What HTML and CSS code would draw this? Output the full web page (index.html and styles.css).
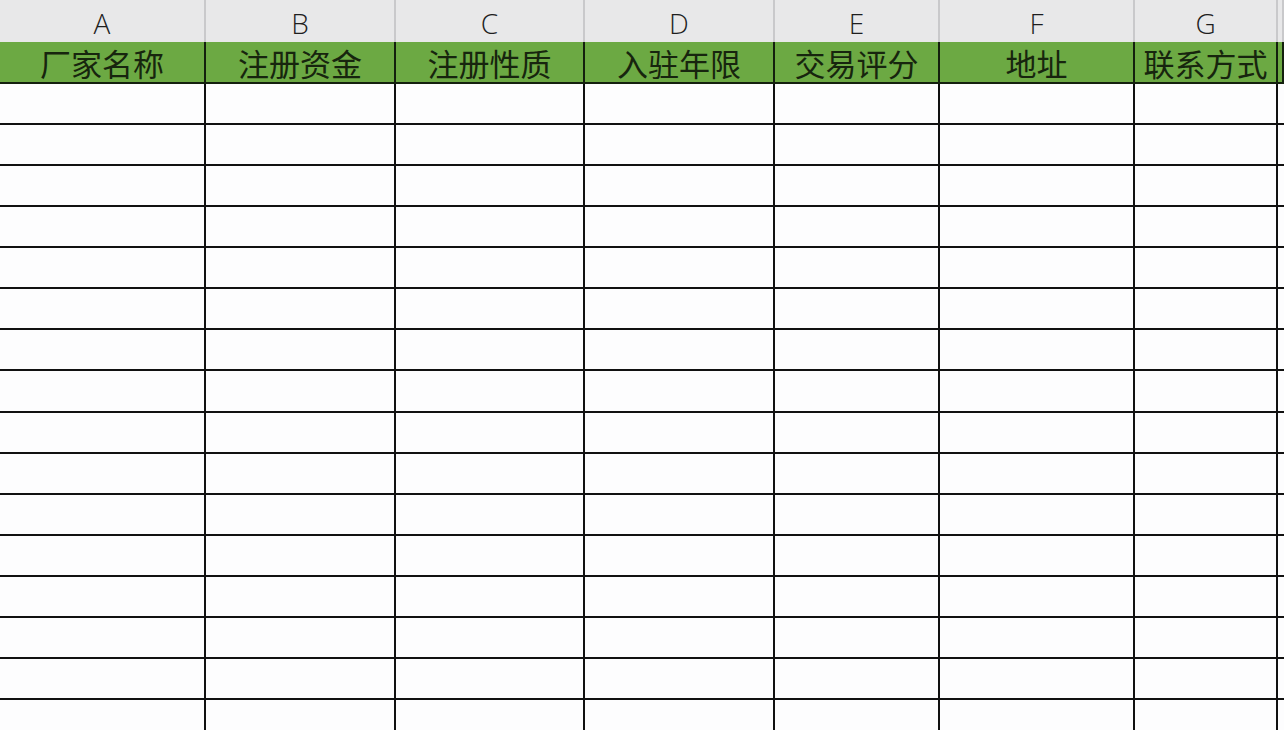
FILE: index.html
```html
<!DOCTYPE html>
<html lang="zh-CN">
<head>
<meta charset="utf-8">
<title>厂家信息表</title>
<link rel="stylesheet" href="styles.css">
</head>
<body>
<div class="sheet">
  <div class="col-letter">A</div>
  <div class="col-letter">B</div>
  <div class="col-letter">C</div>
  <div class="col-letter">D</div>
  <div class="col-letter">E</div>
  <div class="col-letter">F</div>
  <div class="col-letter">G</div>
  <div class="col-letter"></div>

  <div class="head">厂家名称</div>
  <div class="head">注册资金</div>
  <div class="head">注册性质</div>
  <div class="head">入驻年限</div>
  <div class="head">交易评分</div>
  <div class="head">地址</div>
  <div class="head">联系方式</div>
  <div class="head"></div>
</div>
</body>
</html>
```
FILE: styles.css
```css
html, body {
  margin: 0;
  padding: 0;
  width: 1284px;
  height: 730px;
  overflow: hidden;
  background: #fdfdfe;
}

.sheet {
  display: grid;
  grid-template-columns: 206px 190px 189px 190px 165px 195px 143px 1fr;
  grid-template-rows: 42px 42px;
  width: 1284px;
  min-height: 760px;
  position: relative;
  background:
    repeating-linear-gradient(to bottom, transparent 0, transparent 39.07px, #111 39.07px, #111 41.07px) 0 84px / 100% 100% no-repeat;
}

.col-letter {
  background: #e8e8e9;
  border-right: 2px solid #c9c9cb;
  box-sizing: border-box;
  font-family: "Open Sans", "Liberation Sans", sans-serif;
  font-weight: 300;
  font-size: 28px;
  color: #1e1e1e;
  text-align: center;
  line-height: 46px;
}

.head {
  background: #6ca943;
  border-right: 2px solid #14200e;
  border-bottom: 2px solid #14200e;
  box-sizing: border-box;
  padding-top: 2px;
  font-family: "Noto Sans CJK SC", sans-serif;
  font-size: 31px;
  color: #17250e;
  text-align: center;
  line-height: 38px;
  white-space: nowrap;
}

.sheet::after {
  content: "";
  position: absolute;
  left: 0;
  top: 84px;
  right: 0;
  bottom: 0;
  background:
    linear-gradient(#111, #111) 204px 0 / 2px 100% no-repeat,
    linear-gradient(#111, #111) 394px 0 / 2px 100% no-repeat,
    linear-gradient(#111, #111) 583px 0 / 2px 100% no-repeat,
    linear-gradient(#111, #111) 773px 0 / 2px 100% no-repeat,
    linear-gradient(#111, #111) 938px 0 / 2px 100% no-repeat,
    linear-gradient(#111, #111) 1133px 0 / 2px 100% no-repeat,
    linear-gradient(#111, #111) 1276px 0 / 2px 100% no-repeat;
}
```
